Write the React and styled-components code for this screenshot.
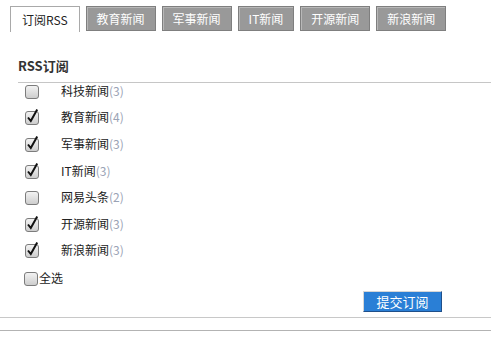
import React from "react";
import styled, { createGlobalStyle } from "styled-components";

const GlobalStyle = createGlobalStyle`
  body {
    margin: 0;
    background: #fff;
    font-family: "Noto Sans CJK SC", "DejaVu Sans", sans-serif;
    font-size: 12px;
    color: #222;
  }
`;

const Page = styled.div`
  width: 491px;
  height: 337px;
  display: flex;
  flex-direction: column;
`;

const TabBar = styled.div`
  display: flex;
  gap: 6px;
  padding: 6px 0 0 10px;
`;

const Tab = styled.div`
  height: 25px;
  padding: 0 ${(p) => (p.$active ? "11px" : "10px")};
  display: flex;
  align-items: center;
  font-size: 12px;
  box-sizing: border-box;
  border: 1px solid ${(p) => (p.$active ? "#a9a9a9" : "#7f7f7f")};
  background: ${(p) => (p.$active ? "#fff" : "#999")};
  color: ${(p) => (p.$active ? "#222" : "#fff")};
  box-shadow: ${(p) => (p.$active ? "none" : "inset 1px 1px 0 #b8b8b8")};
  ${(p) => p.$active && "border-bottom: none; height: 26px;"}
`;

const Section = styled.div`
  padding: 0 0 0 18px;
  margin-top: 25px;
`;

const Heading = styled.div`
  font-size: 13px;
  font-weight: bold;
  color: #333;
  line-height: 18px;
  padding-bottom: 7px;
  border-bottom: 1px solid #c6c6c6;
`;

const List = styled.div`
  display: flex;
  flex-direction: column;
  margin-top: -6px;
`;

const Row = styled.label`
  height: 26.6px;
  display: flex;
  align-items: center;
  padding-left: ${(p) => (p.$compact ? "23px" : "24px")};
  gap: ${(p) => (p.$compact ? "0px" : "21px")};
  margin-top: ${(p) => (p.$compact ? "1px" : "0")};
  font-size: 12px;
  color: #222;
`;

const Count = styled.span`
  color: #9aa3b5;
`;

const Footer = styled.div`
  display: flex;
  justify-content: flex-end;
  padding: 0 49px 0 0;
`;

const SubmitButton = styled.button`
  width: 79px;
  height: 21px;
  padding: 0;
  background: #2a7fd6;
  color: #fff;
  font-family: "Noto Sans CJK SC", sans-serif;
  font-size: 13px;
  border: 1px solid;
  border-color: #d6d6d6 #1f4f8a #1f4f8a #d6d6d6;
`;

const Rule = styled.div`
  height: 1px;
  background: ${(p) => p.$color};
  margin-top: ${(p) => p.$top}px;
`;

const Box = ({ checked }) => (
  <svg width="16" height="17" viewBox="0 0 16 17" style={{ flex: "none" }}>
    <defs>
      <linearGradient id="cbg" x1="0" y1="0" x2="0" y2="1">
        <stop offset="0" stopColor="#f4f4f4" />
        <stop offset="1" stopColor="#cccccc" />
      </linearGradient>
    </defs>
    <rect x="1.5" y="3.5" width="13" height="13" rx="2.5" fill="url(#cbg)" stroke="#7c7c7c" />
    {checked && (
      <path d="M4 9.5 L6.8 13 L13.2 1.5" fill="none" stroke="#111" strokeWidth="2" />
    )}
  </svg>
);

const items = [
  { name: "科技新闻", n: 3, on: false },
  { name: "教育新闻", n: 4, on: true },
  { name: "军事新闻", n: 3, on: true },
  { name: "IT新闻", n: 3, on: true },
  { name: "网易头条", n: 2, on: false },
  { name: "开源新闻", n: 3, on: true },
  { name: "新浪新闻", n: 3, on: true },
];

const tabs = ["订阅RSS", "教育新闻", "军事新闻", "IT新闻", "开源新闻", "新浪新闻"];

export default function App() {
  return (
    <Page>
      <GlobalStyle />
      <TabBar>
        {tabs.map((t, i) => (
          <Tab key={t} $active={i === 0}>
            {t}
          </Tab>
        ))}
      </TabBar>
      <Section>
        <Heading>RSS订阅</Heading>
      </Section>
      <List>
        {items.map((it) => (
          <Row key={it.name}>
            <Box checked={it.on} />
            <span>
              {it.name}
              <Count>({it.n})</Count>
            </span>
          </Row>
        ))}
        <Row $compact>
          <Box checked={false} />
          <span>全选</span>
        </Row>
      </List>
      <Footer>
        <SubmitButton>提交订阅</SubmitButton>
      </Footer>
      <Rule $color="#c8c8c8" $top={5} />
      <Rule $color="#b3b3b3" $top={12} />
    </Page>
  );
}
